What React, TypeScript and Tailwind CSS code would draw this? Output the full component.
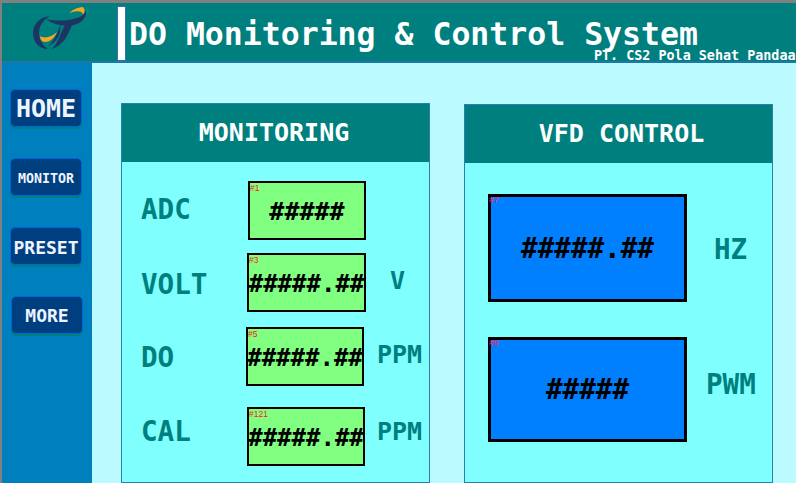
const mono = "font-['DejaVu_Sans_Mono','Liberation_Mono',monospace] font-bold";

const Logo = () => (
  <svg width="56" height="46" viewBox="30 8 56 46" className="mt-[3px]">
    <path d="M67 15C71 11 77 9 81 9C83 11 83 14 81 17C81 13 76 12 67 15Z" fill="#f5a623" />
    <path d="M44 21C53 23 63 23 71 21C77 20 81 18 84 13C85 20 79 25 72 27C62 29 52 27 44 21Z" fill="#1c3563" />
    <path d="M48 18C38 19 31 26 31 35C31 44 37 51 46 51C40 47 37 41 37 35C37 28 41 22 48 18Z" fill="#1c3563" />
    <path d="M38 38C42 41 50 39 55 34C52 41 47 44 43 44C40 44 38 41 38 38Z" fill="#f5a623" />
    <path d="M64 25L71 25C67 33 64 46 50 51C56 45 59 34 64 25Z" fill="#1c3563" />
    <path d="M58 27C60 36 54 45 46 48C52 43 56 35 58 27Z" fill="#1c3563" />
  </svg>
);

const NavButton = ({ label, className }: { label: string; className: string }) => (
  <div
    className={`flex h-[38px] w-[72px] items-center justify-center rounded-[5px] border border-[#0066dd] bg-[#003f7f] text-[#eef4ff] shadow-[0_2px_0_#007f7f] ${className}`}
  >
    {label}
  </div>
);

const Readout = ({ tag, value, className }: { tag: string; value: string; className: string }) => (
  <div className={`relative flex h-[59px] w-[118px] shrink-0 items-center justify-center overflow-hidden border-2 border-black bg-[#80ff80] pt-[3px] text-black ${className}`}>
    <span className="absolute left-0 top-[-1px] font-['Liberation_Sans',sans-serif] text-[8.5px] font-normal leading-[12px] text-[#ff2020]">
      {tag}
    </span>
    {value}
  </div>
);

const BlueReadout = ({ tag, value, className }: { tag: string; value: string; className: string }) => (
  <div className={`relative flex w-[199px] shrink-0 items-center justify-center border-[3px] border-black bg-[#007fff] text-[27.6px] text-black ${className}`}>
    <span className="absolute left-[-2px] top-[-3px] font-['Liberation_Sans',sans-serif] text-[8.5px] font-normal leading-[12px] text-[#ff2060]">
      {tag}
    </span>
    {value}
  </div>
);

const PanelHeader = ({ title, className }: { title: string; className: string }) => (
  <div className={`flex h-[58px] items-center justify-center bg-[#007f7f] text-[25px] text-white ${className}`}>
    {title}
  </div>
);

export default function App() {
  return (
    <div className={`flex h-[483px] w-[796px] flex-col overflow-hidden border-l-2 border-t-[3px] border-[#808080] ${mono}`}>
      <header className="flex h-[60px] shrink-0 border-b-2 border-[#1f77a8] bg-[#007f7f] text-white">
        <div className="flex w-[115px] shrink-0 justify-center">
          <Logo />
        </div>
        <div className="mt-[3px] h-[55px] w-[9px] shrink-0 border border-[#3a6fb0] bg-white" />
        <div className="ml-[3px] flex flex-col">
          <div className="mt-[13px] whitespace-nowrap text-[31.5px] leading-[36px]">DO Monitoring &amp; Control System</div>
          <div className="ml-[465px] mt-[-2px] whitespace-nowrap text-[13.4px] leading-[12px]">PT. CS2 Pola Sehat Pandaan</div>
        </div>
      </header>

      <div className="flex min-h-0 flex-1">
        <nav className="flex w-[90px] shrink-0 flex-col items-start bg-[#007fbf] pl-[8px] pt-[26px]">
          <NavButton label="HOME" className="pt-[2px] text-[25px]" />
          <NavButton label="MONITOR" className="mt-[31px] pt-[4px] text-[13.3px]" />
          <NavButton label="PRESET" className="mt-[31px] pt-[2px] text-[18px]" />
          <NavButton label="MORE" className="ml-[1px] mt-[31px] text-[18px]" />
        </nav>

        <main className="flex flex-1 items-start bg-[#bbfbff] pl-[29px] pt-[40px]">
          <section className="h-[380px] w-[309px] shrink-0 border border-[#2a7fb0] bg-[#80ffff] text-[#007f7f]">
            <PanelHeader title="MONITORING" className="pr-[3px]" />
            <div className="flex flex-col pt-[19px]">
              <div className="flex items-start">
                <span className="ml-[19px] mt-[12px] w-[107px] text-[27.6px] leading-[34px]">ADC</span>
                <Readout tag="#1" value="#####" className="text-[25px]" />
              </div>
              <div className="mt-[13px] flex items-start">
                <span className="ml-[19px] mt-[15px] w-[106px] text-[27.6px] leading-[34px]">VOLT</span>
                <Readout tag="#3" value="#####.##" className="w-[119px] text-[24px]" />
                <span className="ml-[24px] mt-[13px] text-[25px] leading-[30px]">V</span>
              </div>
              <div className="mt-[15px] flex items-start">
                <span className="ml-[19px] mt-[14px] w-[105px] text-[27.6px] leading-[34px]">DO</span>
                <Readout tag="#5" value="#####.##" className="text-[24px]" />
                <span className="ml-[13px] mt-[13px] text-[25px] leading-[30px]">PPM</span>
              </div>
              <div className="mt-[21px] flex items-start">
                <span className="ml-[19px] mt-[8px] w-[106px] text-[27.6px] leading-[34px]">CAL</span>
                <Readout tag="#121" value="#####.##" className="text-[24px]" />
                <span className="ml-[12px] mt-[10px] text-[25px] leading-[30px]">PPM</span>
              </div>
            </div>
          </section>

          <section className="ml-[34px] mt-[1px] h-[379px] w-[309px] shrink-0 border border-[#2a7fb0] bg-[#80ffff] text-[#007f7f]">
            <PanelHeader title="VFD CONTROL" className="pl-[6px]" />
            <div className="flex flex-col pt-[31px]">
              <div className="flex items-center">
                <BlueReadout tag="#7" value="#####.##" className="ml-[23px] h-[108px] pt-[2px]" />
                <span className="ml-[27px] mt-[4px] text-[27.6px] leading-[34px]">HZ</span>
              </div>
              <div className="mt-[35px] flex items-center">
                <BlueReadout tag="#9" value="#####" className="ml-[23px] h-[105px] pt-[1px]" />
                <span className="mb-[10px] ml-[19px] text-[27.6px] leading-[34px]">PWM</span>
              </div>
            </div>
          </section>
        </main>
      </div>
    </div>
  );
}
